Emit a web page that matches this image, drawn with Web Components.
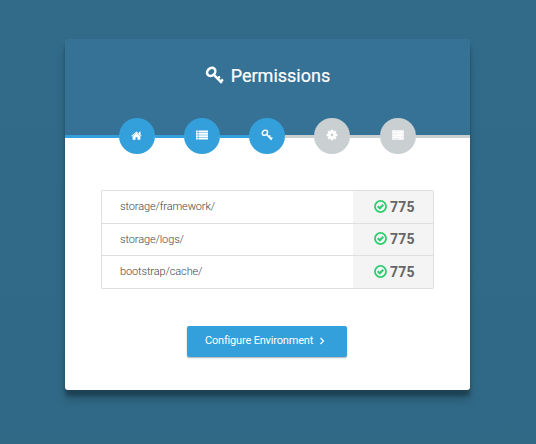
<!DOCTYPE html>
<html lang="en"><head><meta charset="utf-8"><title>Permissions</title>
<style>
body{margin:0;height:444px;overflow:hidden;background:linear-gradient(#326b8a,#306986);font-family:Roboto,"Liberation Sans",sans-serif;color:#666}
</style></head><body>
<installer-card>
<ui-icon slot="icon" name="key" style="--size:19px"></ui-icon>
<span slot="title">Permissions</span>
<step-bar slot="steps"></step-bar>
<permission-list>
<permission-row value="775">storage/framework/</permission-row>
<permission-row value="775" style="--h:31px;--lift:1px">storage/logs/</permission-row>
<permission-row value="775">bootstrap/cache/</permission-row>
</permission-list>
<next-button>Configure Environment</next-button>
</installer-card>
<script>
const define=(name,html,setup)=>customElements.define(name,class extends HTMLElement{
  constructor(){super();const t=document.createElement('template');t.innerHTML=html;
    this.attachShadow({mode:'open'}).append(t.content.cloneNode(true));}
  connectedCallback(){if(setup)setup(this,this.shadowRoot);}
});
const gear=()=>{let s='';for(let i=0;i<8;i++)s+=`<rect x="6.4" y="1" width="3.2" height="4" rx=".5" transform="rotate(${i*45} 8 8)"/>`;
  return s+'<path fill-rule="evenodd" d="M8 3a5 5 0 1 0 0 10A5 5 0 0 0 8 3zM8 6.1a1.9 1.9 0 1 1 0 3.8 1.9 1.9 0 0 1 0-3.8z"/>';};
const icons={
  key:'<g fill="none" stroke="currentColor"><ellipse cx="5.2" cy="5" rx="3.8" ry="3.1" transform="rotate(-42 5.2 5)" stroke-width="2.1"/><path stroke-width="2.1" d="M7.5 7.4 14.2 14.2"/><path stroke-width="1.9" d="M10.4 10.8l2.1-2M13 13.4l2.1-2.1"/></g>',
  home:'<path d="M8 2.1 15.4 8.3l-.8 1L8 3.9 1.4 9.3l-.8-1zM11.6 2.6h2.3V7l-2.3-1.7z"/><path d="M8 4.4 13.6 9V14H9.4v-3.6H6.6V14H2.4V9z"/>',
  list:'<path d="M0 2h2.4v2.5H0zM3.2 2H16v2.5H3.2zM0 5.2h2.4v2.5H0zM3.2 5.2H16v2.5H3.2zM0 8.4h2.4v2.5H0zM3.2 8.4H16v2.5H3.2zM0 11.6h2.4V14H0zM3.2 11.6H16V14H3.2z"/>',
  gear:gear(),
  server:'<path fill-rule="evenodd" d="M.3 1.6h15.4v4H.3zM1.8 3.3v.5h7.8v-.5zM13 3.3v.5h1.2v-.5zM.3 5.9h15.4v4H.3zM1.8 7.6v.5h5.3v-.5zM13 7.6v.5h1.2v-.5zM.3 10.2h15.4v4H.3zM1.8 12v.5h7.8V12zM13 12v.5h1.2V12z"/>',
  check:'<g fill="none" stroke="currentColor"><circle cx="8" cy="8" r="6.8" stroke-width="2.2"/><path d="M4.6 7.7 7.2 10.1l4.2-4.2" stroke-width="2.6"/></g>',
  chevron:'<path fill="none" stroke="currentColor" stroke-width="2.3" d="M5 2l6 6-6 6"/>'
};
define('ui-icon','<style>:host{display:inline-block;flex:none;width:var(--size,12px);height:var(--size,12px)}svg{display:block;width:100%;height:100%}</style><svg viewBox="0 0 16 16" fill="currentColor"></svg>',
  (e,r)=>{r.querySelector('svg').innerHTML=icons[e.getAttribute('name')];});
define('step-bar',`<style>:host{display:flex;height:36px}
i{flex:0 0 29px;height:3px;margin-top:17px;background:#34a0db}i.end{flex:0 0 54px}i.wide{flex:0 0 30px}
b{flex:none;width:36px;height:36px;border-radius:50%;background:#34a0db;color:#fff;display:flex;align-items:center;justify-content:center;padding-bottom:2px;box-sizing:border-box}
.off{background:#cacfd2}</style>
<i class="end"></i><b><ui-icon name="home" style="--size:11px;margin-right:1px"></ui-icon></b><i></i><b><ui-icon name="list"></ui-icon></b><i></i><b><ui-icon name="key"></ui-icon></b><i class="off"></i><b class="off"><ui-icon name="gear"></ui-icon></b><i class="off wide"></i><b class="off"><ui-icon name="server" style="margin-right:1px"></ui-icon></b><i class="off end"></i>`);
define('permission-row',`<style>:host{display:flex;height:var(--h,32px);border-bottom:1px solid #dfdfdf;line-height:31px}
.path{flex:1;padding-left:18px;font-weight:300;font-size:11px;letter-spacing:-.12px;color:#444}
.value{width:80px;box-sizing:border-box;padding-left:21px;background:#f4f4f4;display:flex;align-items:center;gap:3px;font-weight:700;font-size:14px;letter-spacing:.2px}
ui-icon{color:#2ecc71}span{line-height:30px;margin-bottom:var(--lift,0)}</style>
<div class="path"><slot></slot></div><div class="value"><ui-icon name="check" style="--size:13px;margin-top:-2px"></ui-icon><span></span></div>`,
  (e,r)=>{r.querySelector('span').textContent=e.getAttribute('value');});
define('permission-list','<style>:host{display:block;border:1px solid #dfdfdf;border-bottom:0;border-radius:2px;margin-bottom:37px}</style><slot></slot>');
define('next-button',`<style>:host{display:block;width:160px;margin:0 0 0 86px}
button{display:flex;align-items:center;width:160px;height:31px;padding:0 0 2px 18px;box-sizing:border-box;border:0;border-radius:2px;background:#34a0db;color:#fff;font:400 11px Roboto,"Liberation Sans",sans-serif;letter-spacing:-.18px;box-shadow:0 1px 1.5px rgba(0,0,0,.3);gap:5px;white-space:nowrap}</style>
<button><span><slot></slot></span><ui-icon name="chevron" style="--size:8px"></ui-icon></button>`);
define('installer-card',`<style>:host{display:block;width:405px;height:351px;margin:39px 0 0 65px;background:linear-gradient(#357295 20px,#fff 20px);border-radius:3px;box-shadow:0 10px 10px rgba(0,0,0,.19),0 6px 3px rgba(0,0,0,.23)}
header{height:96px;padding-bottom:23px;box-sizing:border-box;background:#357295;border-radius:3px 3px 0 0;display:flex;align-items:center;justify-content:center;gap:7px;color:#fff}
h1{font-weight:400;font-size:18px;margin:0;-webkit-text-stroke:.2px #fff}
.steps{margin-top:-17px}main{padding:36px 36px 0}</style>
<header><slot name="icon"></slot><h1><slot name="title"></slot></h1></header><div class="steps"><slot name="steps"></slot></div><main><slot></slot></main>`);
</script></body></html>
